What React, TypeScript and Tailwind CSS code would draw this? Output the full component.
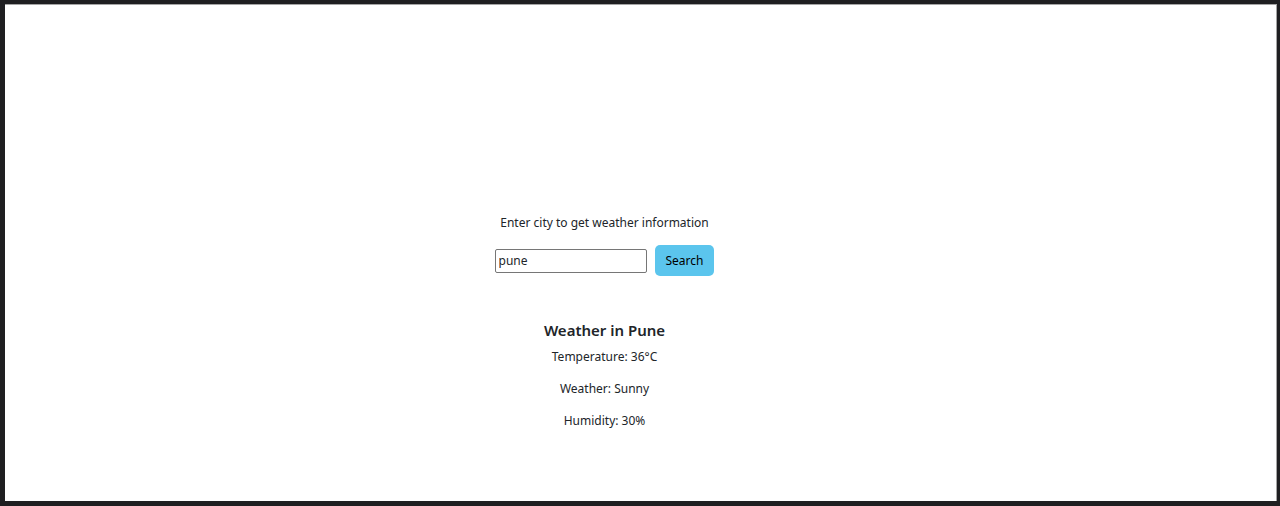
import { useState, type FormEvent } from "react";

export default function App() {
  const [city, setCity] = useState("pune");
  const submit = (e: FormEvent) => e.preventDefault();

  return (
    <div className="flex min-h-screen border-t-4 border-r-3 border-b-5 border-l-5 border-[#1f1f21] bg-white font-['Noto_Sans',sans-serif] text-xs leading-5 text-[#212529]">
      <main className="flex w-full flex-col items-center border-t border-r border-[#a5a5a5] pt-52 pr-[72px] text-center">
        <form onSubmit={submit} className="flex flex-col items-center">
          <label htmlFor="city">Enter city to get weather information</label>
          <div className="mt-3 flex items-center gap-2">
            <input
              id="city"
              value={city}
              onChange={(e) => setCity(e.target.value)}
              className="h-6 w-38 rounded-xs border border-[#767676] bg-white px-[3px] outline-none"
            />
            <button type="submit" className="h-[31px] rounded-[5px] bg-[#5bc5ed] px-[11px] text-black">
              Search
            </button>
          </div>
        </form>
        <section className="mt-11 flex flex-col items-center">
          <h1 className="text-[15px] leading-5 font-semibold">Weather in Pune</h1>
          <div className="mt-[7px] flex flex-col gap-3">
            <p>Temperature: 36°C</p>
            <p>Weather: Sunny</p>
            <p>Humidity: 30%</p>
          </div>
        </section>
      </main>
    </div>
  );
}
